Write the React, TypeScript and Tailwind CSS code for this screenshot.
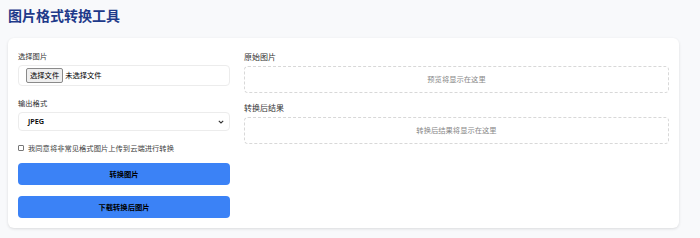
import React from "react";

export default function App() {
  const font = { fontFamily: '"Noto Sans", "Noto Sans CJK SC", sans-serif' };
  return (
    <div className="w-[700px] h-[238px] bg-[#f8f9fb] pt-[6px] px-[8px]" style={font}>
      <h1 className="text-[14px] leading-[20px] font-bold text-[#1e3a8a] h-[32px]">图片格式转换工具</h1>
      <div className="w-[671px] h-[190px] bg-white rounded-[6px] shadow-[0_1px_3px_rgba(0,0,0,0.12)] flex gap-[14px] px-[10px] pt-[12px]">
        <div className="w-[212px] flex flex-col">
          <div className="text-[7.3px] leading-[10px] text-[#333] mt-[1px]">选择图片</div>
          <div className="mt-[4px] h-[21px] border border-[#ececec] rounded-[4px] flex items-center px-[7px] gap-[2px]">
            <span className="h-[15px] px-[3px] border border-[#8a8a8a] bg-[#efefef] rounded-[2px] text-[7.3px] leading-[13px] text-black">选择文件</span>
            <span className="text-[7.3px] text-black">未选择文件</span>
          </div>
          <div className="text-[7.3px] leading-[10px] text-[#333] mt-[12px]">输出格式</div>
          <div className="mt-[4px] h-[19px] border border-[#ececec] rounded-[4px] flex items-center justify-between pl-[9px] pr-[5px]">
            <span className="text-[7.3px] font-semibold text-black">JPEG</span>
            <svg width="6" height="4" viewBox="0 0 6 4"><path d="M0.8 0.8 L3 3 L5.2 0.8" stroke="#333" strokeWidth="1.1" fill="none" /></svg>
          </div>
          <div className="mt-[12px] flex items-center gap-[4px]">
            <span className="w-[6px] h-[6px] border border-[#777] rounded-[1px] bg-white" />
            <span className="text-[7.3px] leading-[10px] text-[#444]">我同意将非常见格式图片上传到云端进行转换</span>
          </div>
          <button className="mt-[10px] h-[22px] w-full bg-[#3b82f6] rounded-[4px] text-[7.3px] font-bold text-black">转换图片</button>
          <button className="mt-[11px] h-[22px] w-full bg-[#3b82f6] rounded-[4px] text-[7.3px] font-bold text-black">下载转换后图片</button>
        </div>
        <div className="flex-1 flex flex-col">
          <div className="text-[8px] leading-[10px] text-[#333] mt-[2px]">原始图片</div>
          <div className="mt-[4px] h-[27px] border border-dashed border-[#d8d8d8] rounded-[4px] flex items-center justify-center text-[7.3px] text-[#888]">预览将显示在这里</div>
          <div className="text-[8px] leading-[10px] text-[#333] mt-[10px]">转换后结果</div>
          <div className="mt-[4px] h-[27px] border border-dashed border-[#d8d8d8] rounded-[4px] flex items-center justify-center text-[7.3px] text-[#888]">转换后结果将显示在这里</div>
        </div>
      </div>
    </div>
  );
}
